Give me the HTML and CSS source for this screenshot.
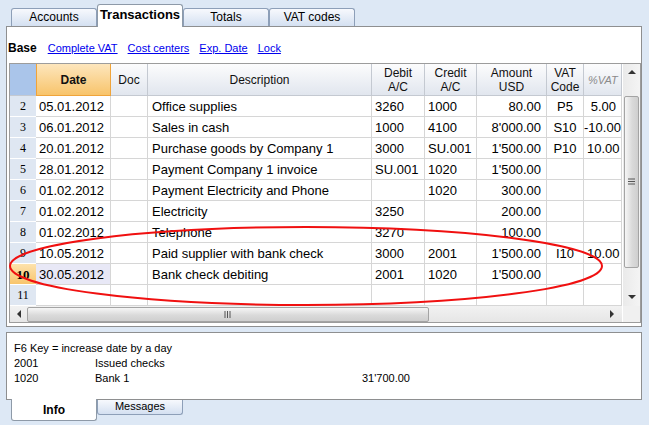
FILE: index.html
```html
<!DOCTYPE html>
<html lang="en">

<head>
    <meta charset="UTF-8" />
    <title>Transactions</title>
    <link rel="stylesheet" href="styles.css">
</head>

<body>
    <div class="tabs top-tabs">
        <div class="tab">Accounts</div>
        <div class="tab current">Transactions</div>
        <div class="tab">Totals</div>
        <div class="tab">VAT codes</div>
    </div>

    <div class="panel">
        <div class="views">
            <b>Base</b>
            <a href="#">Complete VAT</a>
            <a href="#">Cost centers</a>
            <a href="#">Exp. Date</a>
            <a href="#">Lock</a>
        </div>

        <div class="grid">
            <div class="table">
                <div class="row head">
                    <div class="cell corner"></div>
                    <div class="cell date-head">Date</div>
                    <div class="cell">Doc</div>
                    <div class="cell">Description</div>
                    <div class="cell">Debit<br>A/C</div>
                    <div class="cell">Credit<br>A/C</div>
                    <div class="cell">Amount<br>USD</div>
                    <div class="cell">VAT<br>Code</div>
                    <div class="cell pvat-head">%VAT<i class="cut"></i></div>
                </div>

                <div class="row">
                    <div class="cell num">2</div>
                    <div class="cell">05.01.2012</div>
                    <div class="cell"></div>
                    <div class="cell">Office supplies</div>
                    <div class="cell">3260</div>
                    <div class="cell">1000</div>
                    <div class="cell r">80.00</div>
                    <div class="cell c">P5</div>
                    <div class="cell r">5.00</div>
                </div>
                <div class="row">
                    <div class="cell num">3</div>
                    <div class="cell">06.01.2012</div>
                    <div class="cell"></div>
                    <div class="cell">Sales in cash</div>
                    <div class="cell">1000</div>
                    <div class="cell">4100</div>
                    <div class="cell r">8'000.00</div>
                    <div class="cell c">S10</div>
                    <div class="cell clip">-10.00</div>
                </div>
                <div class="row">
                    <div class="cell num">4</div>
                    <div class="cell">20.01.2012</div>
                    <div class="cell"></div>
                    <div class="cell">Purchase goods by Company 1</div>
                    <div class="cell">3000</div>
                    <div class="cell">SU.001</div>
                    <div class="cell r">1'500.00</div>
                    <div class="cell c">P10</div>
                    <div class="cell r">10.00</div>
                </div>
                <div class="row">
                    <div class="cell num">5</div>
                    <div class="cell">28.01.2012</div>
                    <div class="cell"></div>
                    <div class="cell">Payment Company 1 invoice</div>
                    <div class="cell">SU.001</div>
                    <div class="cell">1020</div>
                    <div class="cell r">1'500.00</div>
                    <div class="cell"></div>
                    <div class="cell"></div>
                </div>
                <div class="row">
                    <div class="cell num">6</div>
                    <div class="cell">01.02.2012</div>
                    <div class="cell"></div>
                    <div class="cell">Payment Electricity and Phone</div>
                    <div class="cell"></div>
                    <div class="cell">1020</div>
                    <div class="cell r">300.00</div>
                    <div class="cell"></div>
                    <div class="cell"></div>
                </div>
                <div class="row">
                    <div class="cell num">7</div>
                    <div class="cell">01.02.2012</div>
                    <div class="cell"></div>
                    <div class="cell">Electricity</div>
                    <div class="cell">3250</div>
                    <div class="cell"></div>
                    <div class="cell r">200.00</div>
                    <div class="cell"></div>
                    <div class="cell"></div>
                </div>
                <div class="row">
                    <div class="cell num">8</div>
                    <div class="cell">01.02.2012</div>
                    <div class="cell"></div>
                    <div class="cell">Telephone</div>
                    <div class="cell">3270</div>
                    <div class="cell"></div>
                    <div class="cell r">100.00</div>
                    <div class="cell"></div>
                    <div class="cell"></div>
                </div>
                <div class="row">
                    <div class="cell num">9</div>
                    <div class="cell">10.05.2012</div>
                    <div class="cell"></div>
                    <div class="cell">Paid supplier with bank check</div>
                    <div class="cell">3000</div>
                    <div class="cell">2001</div>
                    <div class="cell r">1'500.00</div>
                    <div class="cell c">I10</div>
                    <div class="cell r">10.00</div>
                </div>
                <div class="row active">
                    <div class="cell num">10</div>
                    <div class="cell sel">30.05.2012</div>
                    <div class="cell"></div>
                    <div class="cell">Bank check debiting</div>
                    <div class="cell">2001</div>
                    <div class="cell">1020</div>
                    <div class="cell r">1'500.00</div>
                    <div class="cell"></div>
                    <div class="cell"></div>
                </div>
                <div class="row">
                    <div class="cell num">11</div>
                    <div class="cell"></div>
                    <div class="cell"></div>
                    <div class="cell"></div>
                    <div class="cell"></div>
                    <div class="cell"></div>
                    <div class="cell"></div>
                    <div class="cell"></div>
                    <div class="cell"></div>
                </div>

                <!-- horizontal scrollbar -->
                <div class="hscroll">
                    <div class="arrow">
                        <svg width="6" height="8"><polygon points="5,0 5,8 1,4" fill="#333" /></svg>
                    </div>
                    <div class="hthumb">
                        <svg width="8" height="7"><path d="M1 0v7M3.5 0v7M6 0v7" stroke="#555" /></svg>
                    </div>
                    <div class="arrow right">
                        <svg width="6" height="8"><polygon points="1,0 1,8 5,4" fill="#333" /></svg>
                    </div>
                </div>
            </div>

            <!-- vertical scrollbar -->
            <div class="vscroll">
                <div class="varrow">
                    <svg width="8" height="5"><polygon points="0,4 8,4 4,0" fill="#333" /></svg>
                </div>
                <div class="vthumb">
                    <svg width="7" height="8"><path d="M0 1h7M0 3.5h7M0 6h7" stroke="#555" /></svg>
                </div>
                <div class="varrow down">
                    <svg width="8" height="5"><polygon points="0,1 8,1 4,5" fill="#333" /></svg>
                </div>
                <div class="vcorner"></div>
            </div>
        </div>
    </div>

    <div class="info">
        <div>F6 Key = increase date by a day</div>
        <div class="line"><span class="acc">2001</span><span>Issued checks</span></div>
        <div class="line"><span class="acc">1020</span><span class="name">Bank 1</span><span>31'700.00</span></div>
    </div>

    <div class="tabs bottom-tabs">
        <div class="tab current">Info</div>
        <div class="tab">Messages</div>
    </div>

    <!-- red marker drawn over the grid -->
    <svg class="marker" width="649" height="425">
        <ellipse cx="306" cy="266" rx="296" ry="39" fill="none" stroke="#f01010" stroke-width="2" />
    </svg>
</body>

</html>
```

FILE: styles.css
```css
* {
    margin: 0;
    padding: 0;
    box-sizing: border-box;
}

body {
    width: 649px;
    height: 425px;
    overflow: hidden;
    position: relative;
    background-color: #dde8f5;
    font-family: "Liberation Sans", Arial, sans-serif;
    font-size: 12px;
    color: #000;
}

/* 
    tabs
*/
.tabs {
    display: flex;
    padding-left: 11px;
}

.top-tabs {
    height: 26px;
    align-items: flex-end;
}

.tab {
    width: 86px;
    height: 18px;
    line-height: 17px;
    text-align: center;
    border: 1px solid #8d9fb8;
    border-bottom: none;
    border-radius: 3px 3px 0 0;
    background: linear-gradient(#f7f9fd, #d4e0f1);
}

.top-tabs .current {
    height: 23px;
    line-height: 20px;
    font-weight: bold;
    font-size: 13px;
    background: #fff;
    border-color: #8e9aa8;
    position: relative;
    top: 1px;
}

/* 
    main panel
*/
.panel {
    margin: 0 7px 0 6px;
    height: 301px;
    border: 1px solid #8e8f90;
    background-color: #fff;
}

.views {
    height: 36px;
    padding: 15px 0 0 1px;
    display: flex;
    gap: 10px;
    font-size: 11px;
    line-height: 13px;
}

.views b {
    font-size: 12px;
    margin-right: 1px;
}

.views a {
    color: #0000ee;
}

.grid {
    margin-left: 2px;
    width: 632px;
    height: 260px;
    border: 1px solid #9c9c9c;
    display: flex;
}

.table {
    width: 613px;
}

.row {
    display: grid;
    grid-template-columns: 26px 75px 37px 224px 53px 52px 70px 37px 38px;
    height: 21px;
    font-size: 13px;
    line-height: 21px;
}

.cell {
    border-right: 1px solid #d6d6d6;
    border-bottom: 1px solid #d6d6d6;
    padding: 0 3px;
    white-space: nowrap;
    overflow: hidden;
}

.cell:nth-child(4) {
    padding-left: 4px;
}

.r {
    text-align: right;
    padding-right: 5px;
}

.c {
    text-align: center;
}

.clip {
    padding-left: 0;
}

.num {
    background-color: #dfe7f2;
    text-align: center;
    font-family: "Liberation Serif", serif;
    font-size: 12px;
    border-right: none;
    border-bottom-color: #fff;
}

.active .num {
    background: linear-gradient(#fde2ac, #f8c56c);
    font-weight: bold;
    font-size: 13px;
}

.sel {
    background-color: #e8e8f6;
}

/* header row */
.row.head {
    height: 32px;
    font-size: 12px;
    line-height: 14px;
}

.head .cell {
    background: linear-gradient(#fcfcfd, #e1e6ee);
    border-right-color: #c4c9d1;
    border-bottom-color: #c4c9d1;
    text-align: center;
    display: flex;
    align-items: center;
    justify-content: center;
    padding: 0;
    color: #111;
}

.head .corner {
    background: #aac5ea;
    border-right: none;
}

.head .date-head {
    background: linear-gradient(#fde6bd, #f8c46b);
    border: 1px solid #f0a43a;
    border-top: none;
    font-weight: bold;
}

.head .pvat-head {
    justify-content: flex-start;
    padding-left: 4px;
    font-style: italic;
    color: #8a8a8a;
    font-size: 11px;
}

.cut {
    width: 2px;
    height: 9px;
    margin-left: 3px;
    border-left: 1px dotted #8a8a8a;
}

/* 
    scrollbars
*/
.hscroll {
    height: 16px;
    display: flex;
    align-items: center;
    background: linear-gradient(#f2f2f2, #e6e6e6);
}

.arrow {
    width: 17px;
    display: flex;
    justify-content: center;
}

.arrow.right {
    margin-left: auto;
    width: 20px;
}

.hthumb {
    width: 402px;
    height: 15px;
    border: 1px solid #a4a4a4;
    border-radius: 2px;
    background: linear-gradient(#f6f6f6, #dadada 55%, #cfcfcf);
    display: flex;
    align-items: center;
    justify-content: center;
}

.vscroll {
    width: 17px;
    margin-left: 1px;
    display: flex;
    flex-direction: column;
    align-items: center;
    background: linear-gradient(90deg, #eaeaea, #f4f4f4);
}

.varrow {
    height: 17px;
    display: flex;
    align-items: center;
    justify-content: center;
}

.vthumb {
    margin-top: 15px;
    width: 15px;
    height: 172px;
    border: 1px solid #a4a4a4;
    border-radius: 2px;
    background: linear-gradient(90deg, #f6f6f6, #dadada 55%, #cfcfcf);
    display: flex;
    align-items: center;
    justify-content: center;
}

.varrow.down {
    margin-top: auto;
    height: 20px;
}

.vcorner {
    height: 16px;
    width: 17px;
    background-color: #f0f0f0;
}

/* 
    info panel
*/
.info {
    margin: 5px 7px 0 6px;
    height: 68px;
    border: 1px solid #8e8f90;
    background-color: #fff;
    padding: 8px 0 0 7px;
    font-size: 11px;
    line-height: 15px;
}

.line {
    display: flex;
}

.acc {
    width: 81px;
}

.name {
    width: 267px;
}

.bottom-tabs .tab {
    height: 15px;
    line-height: 13px;
    border-top: none;
    border-bottom: 1px solid #8d9fb8;
    border-radius: 0 0 3px 3px;
    font-size: 11px;
}

.bottom-tabs .current {
    height: 22px;
    line-height: 22px;
    background: #fff;
    font-weight: bold;
    font-size: 12px;
    border-color: #8e9aa8;
    position: relative;
    top: -1px;
}

.marker {
    position: absolute;
    left: 0;
    top: 0;
    pointer-events: none;
}
```
